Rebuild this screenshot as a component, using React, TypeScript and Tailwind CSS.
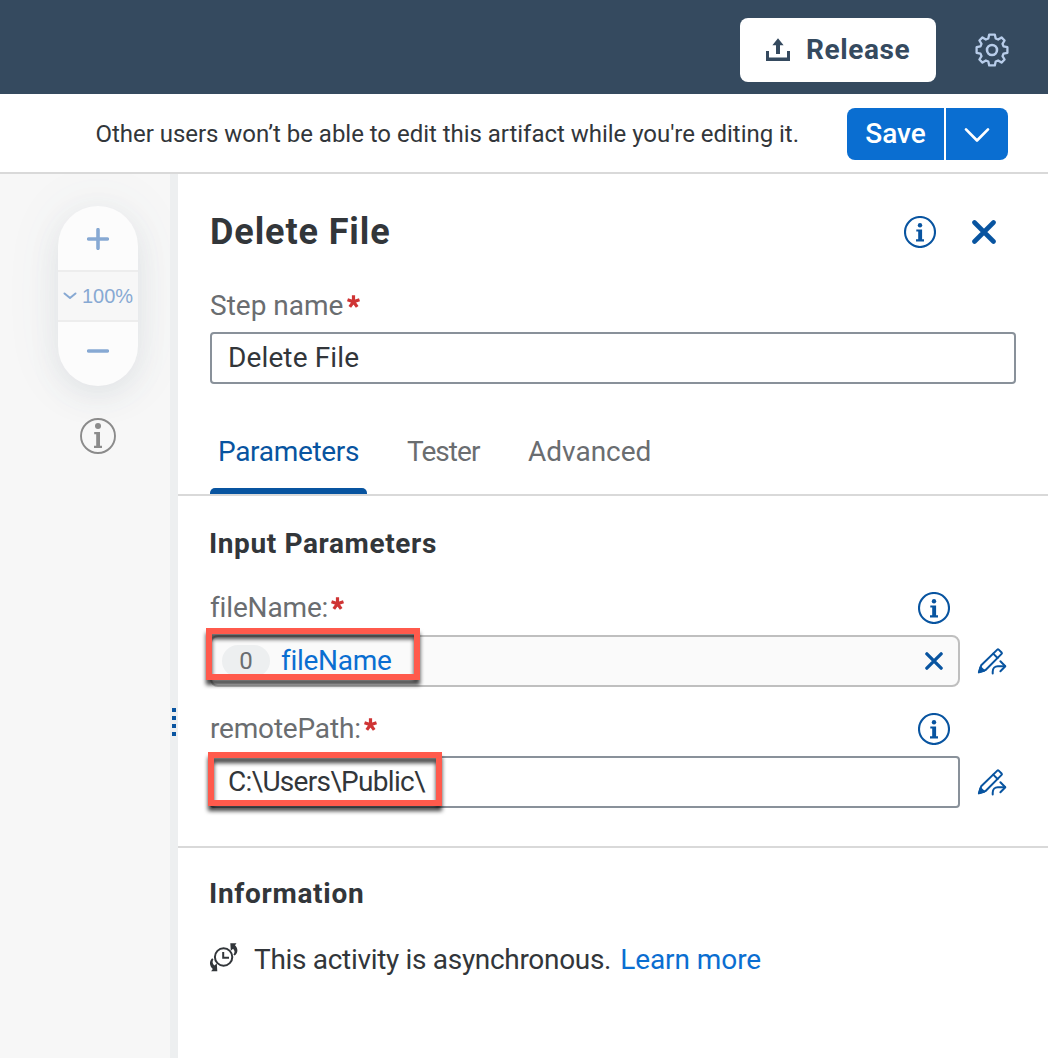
import React from "react";

function InfoIcon({ className, thin = false }: { className: string; thin?: boolean }) {
  return thin ? (
    <svg className={className} viewBox="0 0 36 36" fill="currentColor">
      <circle cx="18" cy="18" r="17" fill="none" stroke="currentColor" strokeWidth="1.9" />
      <circle cx="18" cy="8.1" r="3" />
      <path d="M14.2 13.9h5.8v13.900h2v2.300h-8v-2.300h2.200V16.200h-2z" />
    </svg>
  ) : (
    <svg className={className} viewBox="0 0 32 32" fill="currentColor">
      <circle cx="16" cy="16" r="15" fill="none" stroke="currentColor" strokeWidth="2.1" />
      <circle cx="16" cy="9.3" r="2.2" />
      <path d="M12.3 13.4h5.8v9.9h1.9v2.2h-8v-2.2h2.2v-7.7h-1.9z" />
    </svg>
  );
}

function CloseIcon({ className, width }: { className: string; width: number }) {
  return (
    <svg className={className} viewBox="0 0 24 24" fill="none" stroke="currentColor" strokeWidth={width}>
      <path d="M2.500 2.500l19 19M21.500 2.500l-19 19" strokeLinecap="round" />
    </svg>
  );
}

function EditIcon({ className }: { className: string }) {
  return (
    <svg className={className} viewBox="0 0 30 28" fill="none" stroke="currentColor" strokeWidth="2" strokeLinejoin="round" strokeLinecap="round">
      <path d="M2.200 25L4.200 18.300 20.300 2.600a1 1 0 0 1 1.400 0l2.900 2.900a1 1 0 0 1 0 1.400L8.600 23z" />
      <path d="M16.200 6.600l4.400 4.400" />
      <path d="M1.900 25.400l1.500-5.200 3.700 3.600z" fill="currentColor" />
      <path d="M15.700 26.600v-1.900c0-3.200 2.200-5.400 5.100-5.400h7.200" />
      <path d="M23.400 14.300l4.900 5-4.900 5" />
    </svg>
  );
}

function GearIcon({ className }: { className: string }) {
  return (
    <svg className={className} viewBox="0 0 34 34" fill="none" stroke="currentColor" strokeWidth="2.300" strokeLinejoin="round">
      <path d="M14.2 1.600h5.600l.9 3.900 2.400 1 3.400-2.100 3.100 3.100-2.100 3.400 1 2.400 3.900.9v5.600l-3.900.9-1 2.400 2.100 3.400-3.100 3.100-3.400-2.100-2.400 1-.9 3.900h-5.600l-.9-3.900-2.400-1-3.400 2.100-3.100-3.100 2.100-3.400-1-2.400-3.900-.9v-5.600l3.900-.9 1-2.400-2.100-3.400 3.100-3.100 3.400 2.100 2.400-1z" />
      <circle cx="17" cy="17" r="5" strokeWidth="2.600" />
    </svg>
  );
}

function UploadIcon({ className }: { className: string }) {
  return (
    <svg className={className} viewBox="0 0 26 24" fill="currentColor">
      <path d="M13 .3l5.600 7H15V16h-4V7.300H7.400z" />
      <path d="M1 13h3v6.500h18V13h3v10H1z" />
    </svg>
  );
}

function AsyncIcon({ className }: { className: string }) {
  return (
    <svg className={className} viewBox="0 0 30 30" fill="none" stroke="currentColor" strokeWidth="2">
      <circle cx="14.600" cy="15" r="8.700" />
      <path d="M14.200 10v5.800h5.800" />
      <path d="M21.300 1.200h6.200l-1.500 2c3.200 3.200 3.400 7.400-.3 10.400l-1.300-.9c1.700-2.400 1.500-4-.3-5.900l-2.300 2z" fill="currentColor" stroke="none" />
      <path d="M8.300 29.300H2.100l1.700-2.200C.4 24 0 19.500 3.100 16.300l1.300.9c-1.300 2.400-1 4 .9 6.200l2.500-1.900z" fill="currentColor" stroke="none" />
    </svg>
  );
}

function Star() {
  return (
    <svg className="h-[13px] w-[13px] self-start text-[#cf3434]" viewBox="0 0 13 13" stroke="currentColor" strokeWidth="3.200">
      <path d="M6.500 6.700V.3M6.500 6.700L.5 4.700M6.500 6.700l6-2M6.500 6.700L2.800 11.900M6.500 6.700l3.700 5.200" />
    </svg>
  );
}

function Highlight({ className }: { className: string }) {
  return <div className={`pointer-events-none absolute border-[6px] border-[#ff5a4c] drop-shadow-[0_5px_2px_rgba(0,0,0,0.75)] ${className}`} />;
}

export default function App() {
  return (
    <div className="flex h-[1058px] w-[1048px] flex-col overflow-hidden bg-white font-['Roboto',sans-serif] text-[28px] leading-8 whitespace-nowrap text-[#32363a]">
      <header className="flex h-[94px] shrink-0 items-center justify-end bg-[#354a5f] pr-[39px]">
        <button className="mt-1.5 mr-[39px] flex h-16 w-[196px] items-center rounded-lg bg-white pl-[25px] font-bold tracking-[0.6px] text-[#354a5f]">
          <UploadIcon className="h-6 w-[26px]" />
          <span className="ml-[15px]">Release</span>
        </button>
        <GearIcon className="mt-1.5 h-[34px] w-[34px] text-[#b8cdea]" />
      </header>

      <div className="flex h-20 shrink-0 items-center justify-end border-b-2 border-[#d9d9d9] pt-0.5 pr-10">
        <span className="mr-[48px] text-[24px] tracking-[-0.03px]">Other users won’t be able to edit this artifact while you're editing it.</span>
        <div className="flex h-[52px] gap-0.5 text-white">
          <button className="w-[97px] rounded-l-lg bg-[#0a6ed1] font-medium">Save</button>
          <button className="flex w-[62px] items-center justify-center rounded-r-lg bg-[#0a6ed1]">
            <svg className="mt-0.5 h-4 w-[26px]" viewBox="0 0 26 16" fill="none" stroke="currentColor" strokeWidth="2.700" strokeLinecap="round" strokeLinejoin="round">
              <path d="M2 2.400L13 13.500 24 2.400" />
            </svg>
          </button>
        </div>
      </div>

      <div className="flex min-h-0 flex-1">
        <aside className="flex w-[170px] shrink-0 flex-col items-center overflow-hidden bg-[#f7f7f7] pt-8 pl-[26px]">
          <div className="flex h-[180px] w-20 shrink-0 flex-col overflow-hidden rounded-[40px] bg-[#fcfcfc] text-[#87a9d3] shadow-[0_10px_30px_rgba(85,107,130,0.1),0_0_60px_rgba(85,107,130,0.07)]">
            <div className="flex h-16 items-center justify-center pt-0.5">
              <svg className="h-[22px] w-[22px]" viewBox="0 0 22 22" stroke="currentColor" strokeWidth="3.600" strokeLinecap="round"><path d="M11 1.700v18.600M1.700 11h18.600" /></svg>
            </div>
            <div className="flex h-[52px] items-center border-y-2 border-[#ededed] bg-[#f7f7f7] pl-[5px]">
              <svg className="h-2 w-[14px]" viewBox="0 0 14 8" fill="none" stroke="currentColor" strokeWidth="2" strokeLinecap="round" strokeLinejoin="round"><path d="M1.500 1.500L7 6l5.500-4.500" /></svg>
              <span className="ml-[5px] font-['Liberation_Sans',sans-serif] text-[20px]">100%</span>
            </div>
            <div className="flex flex-1 items-center justify-center pb-1.5">
              <svg className="h-[22px] w-[22px]" viewBox="0 0 22 22" stroke="currentColor" strokeWidth="3.600" strokeLinecap="round"><path d="M1.700 11h18.600" /></svg>
            </div>
          </div>
          <InfoIcon thin className="mt-8 h-9 w-9 shrink-0 text-[#8b8b8b]" />
        </aside>

        <div className="flex w-2 shrink-0 flex-col items-center gap-1 bg-[#edeff0] pt-[534px]">
          <i className="h-1 w-1 bg-[#0854a0]" />
          <i className="h-1 w-1 bg-[#0854a0]" />
          <i className="h-1 w-1 bg-[#0854a0]" />
          <i className="h-1 w-1 bg-[#0854a0]" />
        </div>

        <main className="flex min-w-0 flex-1 flex-col">
          <div className="flex h-[116px] items-center pr-[52px] pl-8 text-[#0854a0]">
            <h1 className="flex-1 text-[36px] font-bold tracking-[0.9px] text-[#32363a]">Delete File</h1>
            <InfoIcon className="mr-[36px] h-8 w-8" />
            <CloseIcon className="h-6 w-6" width={4.6} />
          </div>

          <div className="flex h-[42px] pl-8 text-[#6a6d70]">
            <span>Step name</span>
            <span className="ml-1 flex pt-[5px]"><Star /></span>
          </div>
          <div className="mr-8 ml-8 flex h-[52px] items-center rounded-[4px] border-2 border-[#89919a] pl-4 tracking-[0.12px]">Delete File</div>

          <nav className="mt-8 flex h-20 shrink-0 gap-[40px] border-b-2 border-[#d9d9d9] pl-8 text-[#6a6d70]">
            <div className="flex h-full w-[157px] flex-col justify-between pt-5 text-[#0854a0]">
              <span className="pl-2 tracking-[-0.31px]">Parameters</span>
              <i className="h-1.5 rounded-t-[5px] bg-[#0854a0]" />
            </div>
            <span className="w-[81px] pt-5 tracking-[-0.95px]">Tester</span>
            <span className="pt-5">Advanced</span>
          </nav>

          <section className="relative flex h-[352px] shrink-0 flex-col border-b-2 border-[#d9d9d9] pl-8">
            <h2 className="-ml-px pt-8 font-bold tracking-[0.62px]">Input Parameters</h2>
            <div className="mt-8 flex h-[43px] w-[750px] justify-between">
              <div className="flex text-[#6a6d70]">
                <span className="tracking-[-0.15px]">fileName:</span>
                <span className="ml-[3px] flex pt-[5px]"><Star /></span>
              </div>
              <InfoIcon className="mr-[10px] h-8 w-8 text-[#0854a0]" />
            </div>
            <div className="flex h-[52px] items-center text-[#0854a0]">
              <div className="flex h-full w-[750px] items-center rounded-lg border-2 border-[#bfbfbf] bg-[#fafafa] pr-[15px] pl-[10px]">
                <span className="flex h-8 w-12 items-center justify-center rounded-full bg-[#edeff0] text-[24px] text-[#6a6d70]">0</span>
                <span className="ml-[11px] flex-1 tracking-[-0.28px] text-[#0a6ed1]">fileName</span>
                <CloseIcon className="h-[18px] w-[18px]" width={4.4} />
              </div>
              <EditIcon className="ml-[17px] h-7 w-[30px]" />
            </div>
            <div className="mt-[26px] flex h-[43px] w-[750px] justify-between">
              <div className="flex text-[#6a6d70]">
                <span className="tracking-[-0.18px]">remotePath:</span>
                <span className="ml-[3px] flex pt-[5px]"><Star /></span>
              </div>
              <InfoIcon className="mr-[10px] h-8 w-8 text-[#0854a0]" />
            </div>
            <div className="flex h-[52px] items-center">
              <div className="flex h-full w-[750px] items-center rounded-[4px] border-2 border-[#89919a] pl-4 tracking-[-0.7px]">{"C:\\Users\\Public\\"}</div>
              <EditIcon className="ml-[17px] h-7 w-[30px] text-[#0854a0]" />
            </div>
            <Highlight className="top-[132px] left-[28px] h-[52px] w-[214px]" />
            <Highlight className="top-[256px] left-[30px] h-[54px] w-[234px]" />
          </section>

          <section className="pt-[30px] pl-8">
            <h2 className="-ml-px font-bold tracking-[0.7px]">Information</h2>
            <div className="mt-[34px] flex">
              <AsyncIcon className="-mt-[2px] -ml-px h-[30px] w-[30px]" />
              <span className="ml-[15px] tracking-[-0.31px]">This activity is asynchronous.</span>
              <a className="ml-[9px] tracking-[-0.08px] text-[#0a6ed1]">Learn more</a>
            </div>
          </section>
        </main>
      </div>
    </div>
  );
}
